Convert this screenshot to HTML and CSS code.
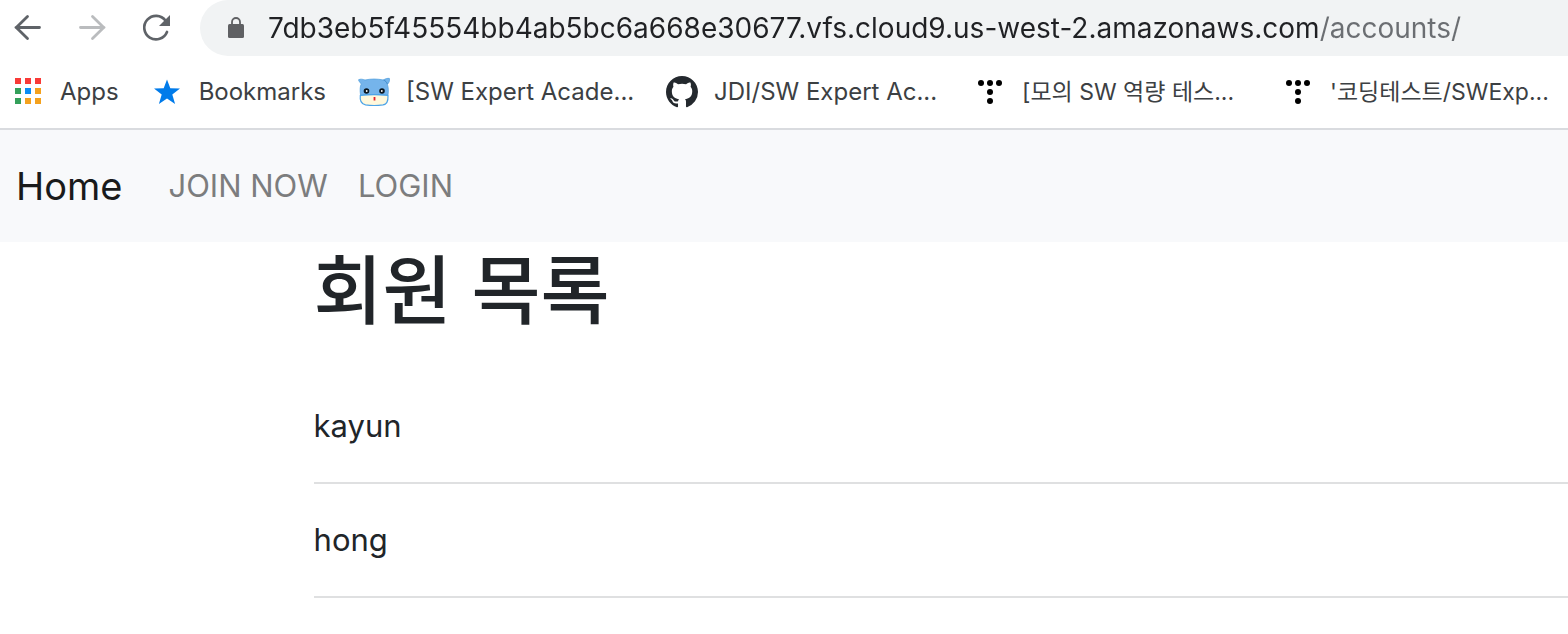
FILE: index.html
```html
<!DOCTYPE html>
<html lang="ko">
<head>
<meta charset="utf-8">
<meta name="viewport" content="width=device-width, initial-scale=1">
<title>회원 목록</title>
<link rel="stylesheet" href="styles.css">
</head>
<body>
<header class="browser">
  <div class="toolbar">
    <button class="tool" type="button" aria-label="Back">
      <svg class="icon" viewBox="0 0 32 32"><path d="M27.500 15.500H4M15.500 4.500 4.300 15.500 15.500 26.500" fill="none" stroke="#5f6368" stroke-width="2.800" stroke-linecap="round"/></svg>
    </button>
    <button class="tool" type="button" aria-label="Forward">
      <svg class="icon" viewBox="0 0 32 32"><path d="M4.500 15.500H28M16.500 4.500 27.700 15.500 16.500 26.500" fill="none" stroke="#babcbe" stroke-width="2.800" stroke-linecap="round"/></svg>
    </button>
    <button class="tool" type="button" aria-label="Reload">
      <svg class="icon" viewBox="0 0 32 32"><path d="M25.500 8.500A11.800 11.800 0 1 0 27 20" fill="none" stroke="#5f6368" stroke-width="2.700" stroke-linecap="round"/><path d="M30 3v11H19z" fill="#5f6368"/></svg>
    </button>
    <div class="address">
      <svg class="lock" viewBox="0 0 16 22" aria-hidden="true"><rect y="7" width="16" height="14" rx="1.500" fill="#5f6063"/><path d="M4 8V5a4 4 0 0 1 8 0v3" fill="none" stroke="#5f6063" stroke-width="1.800"/></svg>
      <input class="url" type="text" aria-label="Address" spellcheck="false" value="7db3eb5f45554bb4ab5bc6a668e30677.vfs.cloud9.us-west-2.amazonaws.com/accounts/">
    </div>
  </div>
  <nav class="bookmarks" aria-label="Bookmarks bar">
    <a class="bookmark" href="#apps">
      <svg class="icon" viewBox="0 0 32 32"><path d="M3 2h6v6H3zM13 2h6v6h-6zM23 2h6v6h-6z" fill="#f93a37"/><path d="M3 12h6v6H3zM3 22h6v6H3z" fill="#34a05a"/><path d="M13 12h6v6h-6z" fill="#0a8df5"/><path d="M23 12h6v6h-6zM13 22h6v6h-6zM23 22h6v6h-6z" fill="#f4a11d"/></svg>
      <span>Apps</span>
    </a>
    <a class="bookmark" href="#bookmarks">
      <svg class="icon" viewBox="0 0 32 32"><path d="M16 3.500 19.300 12.300 29 12.500 21.300 18.500 24.100 28 16 22.500 7.900 28 10.700 18.500 3 12.500 12.700 12.300z" fill="#007bea"/></svg>
      <span>Bookmarks</span>
    </a>
    <a class="bookmark" href="#academy">
      <svg class="icon" viewBox="0 0 32 32"><path d="M2.500 19C1.800 14 2 10 3.300 8 1.200 5.500.4 4.400.6 3.700 2.500 2.800 5 3.200 7 4c6-1.300 12-1.300 18.500 0C27 2.800 29.500 2.100 31.400 2.400c.5 2.400-.4 4.500-2 5.800C30.500 12 30.600 15 30 19z" fill="#75b4eb" stroke="#4e9ddd" stroke-width=".7"/><path d="M25.500 3.800c1.900 1 3.300 2.300 3.900 4.400" fill="none" stroke="#3f8ac9"/><path d="M2.300 19.500C9 18.700 23 18.700 30 19.500c.3 5.500-.7 8.700-5 9.400-6 .8-12 .8-17.500 0C3 28 1.700 24.500 2.300 19.500z" fill="#fff8dc" stroke="#4ba3e8" stroke-width="1.200"/><circle cx="8.500" cy="15" r="2.800" fill="#0b1720"/><circle cx="24" cy="15" r="2.800" fill="#0b1720"/><circle cx="8.700" cy="15" r=".9" fill="#fff"/><circle cx="23.800" cy="15" r=".9" fill="#fff"/><path d="M16.500 21v3.500" stroke="#e3202c" stroke-width="1.800"/></svg>
      <span class="label">[SW Expert Acade...</span>
    </a>
    <a class="bookmark" href="#jdi">
      <svg class="icon" viewBox="0 0 16 16"><path fill="#24292e" d="M8 0C3.580 0 0 3.580 0 8c0 3.540 2.290 6.530 5.470 7.590.4.070.55-.17.55-.38 0-.19-.01-.82-.01-1.490-2.010.37-2.530-.49-2.690-.94-.09-.23-.48-.94-.82-1.130-.28-.15-.68-.52-.01-.53.63-.01 1.080.58 1.230.82.72 1.210 1.870.87 2.330.66.070-.52.28-.87.51-1.070-1.780-.2-3.640-.89-3.640-3.950 0-.87.31-1.590.82-2.150-.08-.2-.36-1.020.08-2.120 0 0 .67-.21 2.200.82.64-.18 1.320-.27 2-.27s1.360.09 2 .27c1.530-1.040 2.200-.82 2.200-.82.44 1.100.16 1.920.08 2.120.51.56.82 1.270.82 2.150 0 3.070-1.870 3.750-3.650 3.950.29.25.54.73.54 1.480 0 1.070-.01 1.930-.01 2.200 0 .21.15.46.55.38A8.010 8.010 0 0 0 16 8c0-4.420-3.580-8-8-8z"/></svg>
      <span class="label">JDI/SW Expert Ac...</span>
    </a>
    <a class="bookmark" href="#mock">
      <svg class="icon" viewBox="0 0 32 32"><g fill="#000"><circle cx="7" cy="7" r="3"/><circle cx="16" cy="7" r="3"/><circle cx="25" cy="7" r="3"/><circle cx="16" cy="16" r="3"/><circle cx="16" cy="25" r="3"/></g></svg>
      <span class="label label-ko">[모의 SW 역량 테스...</span>
    </a>
    <a class="bookmark" href="#coding">
      <svg class="icon" viewBox="0 0 32 32"><g fill="#000"><circle cx="7" cy="7" r="3"/><circle cx="16" cy="7" r="3"/><circle cx="25" cy="7" r="3"/><circle cx="16" cy="16" r="3"/><circle cx="16" cy="25" r="3"/></g></svg>
      <span class="label label-ko">'코딩테스트/SWExp...</span>
    </a>
  </nav>
</header>
<nav class="navbar" aria-label="Site">
  <a class="brand" href="#home">Home</a>
  <a class="nav-link" href="#join">JOIN NOW</a>
  <a class="nav-link" href="#login">LOGIN</a>
</nav>
<main class="content">
  <h1 class="title">회원 목록</h1>
  <ul class="members">
    <li class="member">kayun</li>
    <li class="member">hong</li>
  </ul>
</main>
</body>
</html>
```
FILE: styles.css
```css
* {
  box-sizing: border-box;
}

body {
  margin: 0;
  overflow-x: hidden;
  background: #fff;
  color: #212529;
  font-family: Inter, "Noto Sans CJK KR", sans-serif;
  font-size: 31px;
  line-height: 48px;
}

a {
  color: inherit;
  text-decoration: none;
}

.browser {
  border-bottom: 2px solid #d9dbdf;
}

.toolbar {
  display: flex;
  align-items: center;
  gap: 32px;
  padding-left: 12px;
}

.tool {
  flex: none;
  padding: 0;
  border: 0;
  background: none;
  line-height: 0;
}

.icon {
  flex: none;
  width: 32px;
  height: 32px;
}

.address {
  display: flex;
  flex: 1;
  align-items: center;
  gap: 24px;
  height: 56px;
  margin-left: -4px;
  padding-left: 28px;
  border-radius: 28px 0 0 28px;
  background: #f1f3f4;
}

.lock {
  flex: none;
  width: 16px;
  height: 22px;
}

.url {
  flex: 1;
  min-width: 0;
  height: 40px;
  padding: 0;
  border: 0;
  outline: 0;
  background: linear-gradient(90deg, #202124 1052px, #6b6e72 1052px);
  background-clip: text;
  color: #202124;
  -webkit-text-fill-color: transparent;
  font-family: inherit;
  font-size: 28px;
}

.bookmarks {
  display: flex;
  gap: 32px;
  padding: 20px 12px;
  color: #3c4043;
  font-size: 24px;
  line-height: 32px;
  white-space: nowrap;
}

.bookmark {
  display: flex;
  flex: none;
  gap: 16px;
}

.label {
  width: 228px;
}

.label-ko {
  font-size: 23px;
}

.navbar {
  display: flex;
  align-items: center;
  gap: 30px;
  padding: 32px 16px;
  background: #f8f9fb;
}

.brand {
  margin-right: 16px;
  color: #191a1b;
  font-size: 38px;
}

.nav-link {
  color: #7c7d7e;
}

.content {
  margin-left: 20%;
}

.title {
  margin: 0 0 30px;
  font-size: 75px;
  font-weight: 500;
  line-height: 98px;
}

.members {
  margin: 0;
  padding: 0;
  list-style: none;
}

.member {
  padding: 32px 0;
  border-bottom: 2px solid #dfe0e1;
}
```
